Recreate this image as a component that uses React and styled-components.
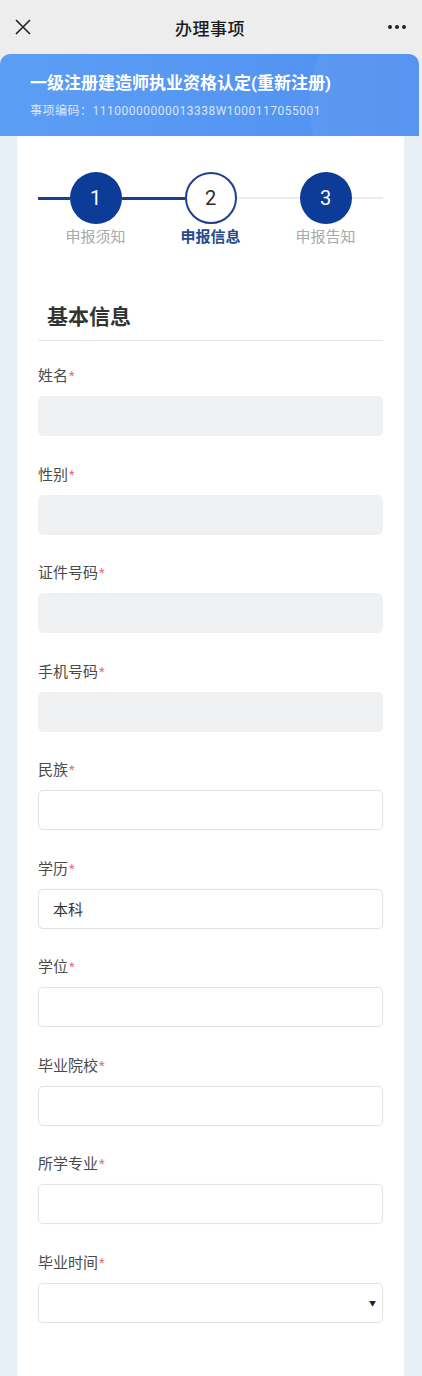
import React from 'react'
import styled, { createGlobalStyle } from 'styled-components'

const GlobalStyle = createGlobalStyle`
  html, body {
    margin: 0;
    padding: 0;
    background: #e7f0f6;
  }
  * { box-sizing: border-box; }
  body {
    font-family: Roboto, "Noto Sans CJK SC", sans-serif;
  }
`

const Page = styled.div`
  width: 422px;
  min-height: 1376px;
  background: #e7f0f6;
  display: flex;
  flex-direction: column;
`

const NavBar = styled.div`
  height: 54px;
  background: #ededed;
  display: flex;
  align-items: center;
  justify-content: space-between;
  padding: 0 14px 0 12px;
`

const NavTitle = styled.div`
  font-size: 17px;
  font-weight: 500;
  color: #1c1c1c;
  letter-spacing: 0.5px;
`

const IconBtn = styled.div`
  width: 22px;
  height: 22px;
  display: flex;
  align-items: center;
  justify-content: center;
`

const Header = styled.div`
  background: #ededed;
`

const Banner = styled.div`
  margin: 0 3px 0 0;
  height: 82px;
  border-radius: 10px 10px 0 0;
  background:
    radial-gradient(circle at 440px 50px, rgba(255,255,255,0.05) 0 130px, transparent 131px),
    linear-gradient(90deg, #5c9df5 0%, #5596f3 60%, #4f8ef0 100%);
  padding: 18px 0 0 30px;
  display: flex;
  flex-direction: column;
`

const BannerTitle = styled.div`
  color: #fff;
  font-size: 17px;
  font-weight: 700;
  line-height: 22px;
`

const BannerCode = styled.div`
  margin-top: 9px;
  color: rgba(255, 255, 255, 0.78);
  font-size: 12px;
  letter-spacing: 0.5px;
  line-height: 16px;
`

const Body = styled.div`
  flex: 1;
  display: flex;
  padding: 0 18px 0 17px;
  background: #e7f0f6;
`

const Card = styled.div`
  flex: 1;
  background: #fff;
  padding: 36px 21px 40px 21px;
  display: flex;
  flex-direction: column;
`

const StepTrack = styled.div`
  display: flex;
  align-items: center;
`

const Segment = styled.div`
  flex: ${p => p.$grow};
  height: ${p => (p.$active ? '3px' : '2px')};
  background: ${p => (p.$active ? '#1d3f8f' : '#ececec')};
`

const Circle = styled.div`
  width: 52px;
  height: 52px;
  border-radius: 50%;
  display: flex;
  align-items: center;
  justify-content: center;
  font-size: 20px;
  background: ${p => (p.$outline ? '#fff' : '#0d3b98')};
  color: ${p => (p.$outline ? '#2b2b2b' : '#fff')};
  border: ${p => (p.$outline ? '2.5px solid #1d3f8f' : 'none')};
`

const StepLabels = styled.div`
  margin-top: 3px;
  display: grid;
  grid-template-columns: repeat(3, 1fr);
`

const StepLabel = styled.div`
  text-align: center;
  font-size: 15px;
  line-height: 20px;
  color: ${p => (p.$current ? '#244a8c' : '#a9a9a9')};
  font-weight: ${p => (p.$current ? 700 : 400)};
`

const SectionTitle = styled.div`
  margin-top: 55px;
  padding: 0 0 8px 9px;
  border-bottom: 1px solid #e6e6e6;
  font-size: 21px;
  font-weight: 700;
  line-height: 30px;
  color: #333;
`

const Fields = styled.div`
  margin-top: 25px;
  display: flex;
  flex-direction: column;
  gap: 28.5px;
`

const Field = styled.div`
  display: flex;
  flex-direction: column;
  gap: 10px;
`

const Label = styled.div`
  font-size: 15px;
  line-height: 20px;
  color: #4a4a4a;
`

const Star = styled.span`
  color: #e56b86;
  font-size: 13px;
  vertical-align: top;
  margin-left: 1px;
`

const Control = styled.div`
  height: 40px;
  border-radius: 5px;
  display: flex;
  align-items: center;
  justify-content: space-between;
  padding: 0 6px 0 14px;
  font-size: 15px;
  color: #333;
  background: ${p => (p.$disabled ? '#f0f1f3' : '#fff')};
  border: 1px solid ${p => (p.$disabled ? '#f0f1f3' : '#e3e3e3')};
  box-shadow: ${p => (p.$disabled ? 'none' : '0 0 2px rgba(0,0,0,0.04)')};
`

const Caret = styled.span`
  font-size: 7px;
  color: #222;
`

const fields = [
  { label: '姓名', disabled: true },
  { label: '性别', disabled: true },
  { label: '证件号码', disabled: true },
  { label: '手机号码', disabled: true },
  { label: '民族' },
  { label: '学历', value: '本科' },
  { label: '学位' },
  { label: '毕业院校' },
  { label: '所学专业' },
  { label: '毕业时间', select: true },
]

const App = () => {
  return (
    <Page>
      <GlobalStyle />
      <Header>
        <NavBar>
          <IconBtn>
            <svg width="18" height="18" viewBox="0 0 18 18">
              <path d="M2 2 L16 16 M16 2 L2 16" stroke="#222" strokeWidth="1.6" fill="none" />
            </svg>
          </IconBtn>
          <NavTitle>办理事项</NavTitle>
          <IconBtn>
            <svg width="20" height="6" viewBox="0 0 20 6">
              <circle cx="3" cy="3" r="2" fill="#222" />
              <circle cx="10" cy="3" r="2" fill="#222" />
              <circle cx="17" cy="3" r="2" fill="#222" />
            </svg>
          </IconBtn>
        </NavBar>
        <Banner>
          <BannerTitle>一级注册建造师执业资格认定(重新注册)</BannerTitle>
          <BannerCode>事项编码：11100000000013338W1000117055001</BannerCode>
        </Banner>
      </Header>
      <Body>
        <Card>
          <StepTrack>
            <Segment $grow={1} $active />
            <Circle>1</Circle>
            <Segment $grow={2} $active />
            <Circle $outline>2</Circle>
            <Segment $grow={2} />
            <Circle>3</Circle>
            <Segment $grow={1} />
          </StepTrack>
          <StepLabels>
            <StepLabel>申报须知</StepLabel>
            <StepLabel $current>申报信息</StepLabel>
            <StepLabel>申报告知</StepLabel>
          </StepLabels>
          <SectionTitle>基本信息</SectionTitle>
          <Fields>
            {fields.map(f => (
              <Field key={f.label}>
                <Label>
                  {f.label}
                  <Star>*</Star>
                </Label>
                <Control $disabled={f.disabled}>
                  <span>{f.value || ''}</span>
                  {f.select && <Caret>▼</Caret>}
                </Control>
              </Field>
            ))}
          </Fields>
        </Card>
      </Body>
    </Page>
  )
}

export default App
